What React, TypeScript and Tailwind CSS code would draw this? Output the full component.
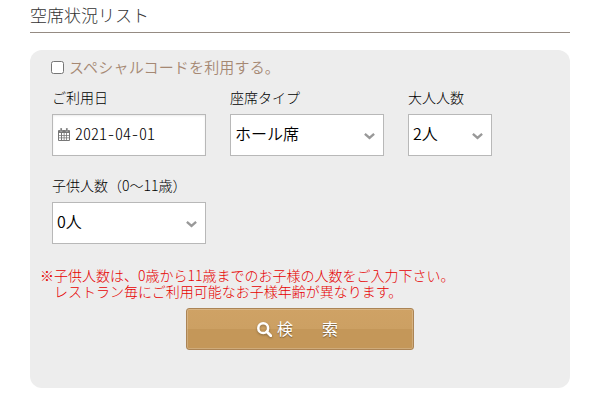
import React from 'react';

function Chevron() {
  return (
    <svg className="mt-[2px] h-[7px] w-[11px] shrink-0" viewBox="0 0 11 7" fill="none">
      <path d="M0.9 0.9 L5.5 4.9 L10.1 0.9" stroke="#999" strokeWidth="2.4" />
    </svg>
  );
}

function CalendarIcon() {
  return (
    <svg className="-mt-px h-[13px] w-3 shrink-0" viewBox="0 0 12 13">
      <path d="M1 2h10a1 1 0 0 1 1 1v9a1 1 0 0 1-1 1H1a1 1 0 0 1-1-1V3a1 1 0 0 1 1-1z" fill="#777" />
      <path d="M1 5h2v2H1zM4 5h1.7v2H4zM6.5 5h1.7v2H6.5zM9 5h2v2H9zM1 7.7h2v1.8H1zM4 7.7h1.7v1.8H4zM6.5 7.7h1.7v1.8H6.5zM9 7.7h2v1.8H9zM1 10.2h2v1.8H1zM4 10.2h1.7v1.8H4zM6.5 10.2h1.7v1.8H6.5zM9 10.2h2v1.8H9z" fill="#fff" />
      <path d="M2.3 0h1.7v3.5H2.3zM8 0h1.7v3.5H8z" fill="#666" stroke="#ddd" strokeWidth="0.4" />
    </svg>
  );
}

function SearchIcon() {
  return (
    <svg className="h-[15px] w-[15px] shrink-0 drop-shadow-[0_1px_1px_rgba(0,0,0,0.3)]" viewBox="0 0 15 15" fill="none">
      <circle cx="6.2" cy="6.2" r="4.9" stroke="#fff" strokeWidth="2.5" />
      <path d="M9.8 9.8 L13.8 13.8" stroke="#fff" strokeWidth="2.8" strokeLinecap="round" />
    </svg>
  );
}

function Label({ children }: { children: React.ReactNode }) {
  return <div className="h-[26px] text-sm leading-[18px] font-light whitespace-nowrap text-black">{children}</div>;
}

function Select({ label, value, width }: { label: string; value: string; width: string }) {
  return (
    <div>
      <Label>{label}</Label>
      <div className={`flex h-[42px] items-center justify-between border border-[#b8b8b8] bg-white pr-[8px] pl-1 text-base text-black ${width}`}>
        <span className="-mt-[4px] leading-6">{value}</span>
        <Chevron />
      </div>
    </div>
  );
}

export default function App() {
  return (
    <div className="h-[404px] w-[600px] overflow-hidden bg-white px-[30px] font-['Noto_Sans_CJK_JP',sans-serif] font-[350]">
      <h1 className="h-[33px] border-b border-[#958b83] pt-[2px] text-[17px] leading-[26px] font-light text-[#333]">空席状況リスト</h1>
      <div className="mt-[17px] h-[338px] rounded-[12px] bg-[#ededed]">
        <label className="flex h-[38px] items-center pl-[21px] text-[15px] text-[#a58873]">
          <span className="-mt-[3px] mr-[5px] h-[13px] w-[13px] rounded-[2.5px] border border-[#767676] bg-white" />
          <span className="-mt-[4px] leading-5 tracking-[0.17px]">スペシャルコードを利用する。</span>
        </label>
        <div className="flex gap-6 pl-[22px]">
          <div>
            <Label>ご利用日</Label>
            <div className="flex h-[42px] w-[154px] items-center border border-[#b8b8b8] bg-white pl-[5px] text-black shadow-[inset_0_1px_2px_rgba(0,0,0,0.08)]">
              <CalendarIcon />
              <span className="-mt-[4px] ml-[5px] text-base leading-6 font-light [font-feature-settings:'hwid']">2021-04-01</span>
            </div>
          </div>
          <Select label="座席タイプ" value="ホール席" width="w-[154px]" />
          <Select label="大人人数" value="2人" width="w-[84px]" />
        </div>
        <div className="mt-5 pl-[22px]">
          <Select label="子供人数（0～11歳）" value="0人" width="w-[154px]" />
        </div>
        <div className="mt-[23px] pl-[10px] text-sm leading-4 font-light whitespace-pre text-[#e60000]">
          <p>※子供人数は、0歳から11歳までのお子様の人数をご入力下さい。</p>
          <p>{'　'}レストラン毎にご利用可能なお子様年齢が異なります。</p>
        </div>
        <button className="mt-[9px] ml-[156px] flex h-[42px] w-[228px] items-center rounded-[3px] border border-[#ab8455] bg-linear-to-b from-[#cfa265] from-0% via-[#cca063] via-50% to-[#c49759] to-50% pl-[70px] text-base font-normal text-white shadow-[inset_0_0_0_1px_rgba(255,255,255,0.2)]">
          <SearchIcon />
          <span className="-mt-[3px] ml-[5px] flex gap-[29px] leading-6 [text-shadow:0_1px_1px_rgba(0,0,0,0.4)]">
            <span>検</span>
            <span>索</span>
          </span>
        </button>
      </div>
    </div>
  );
}
